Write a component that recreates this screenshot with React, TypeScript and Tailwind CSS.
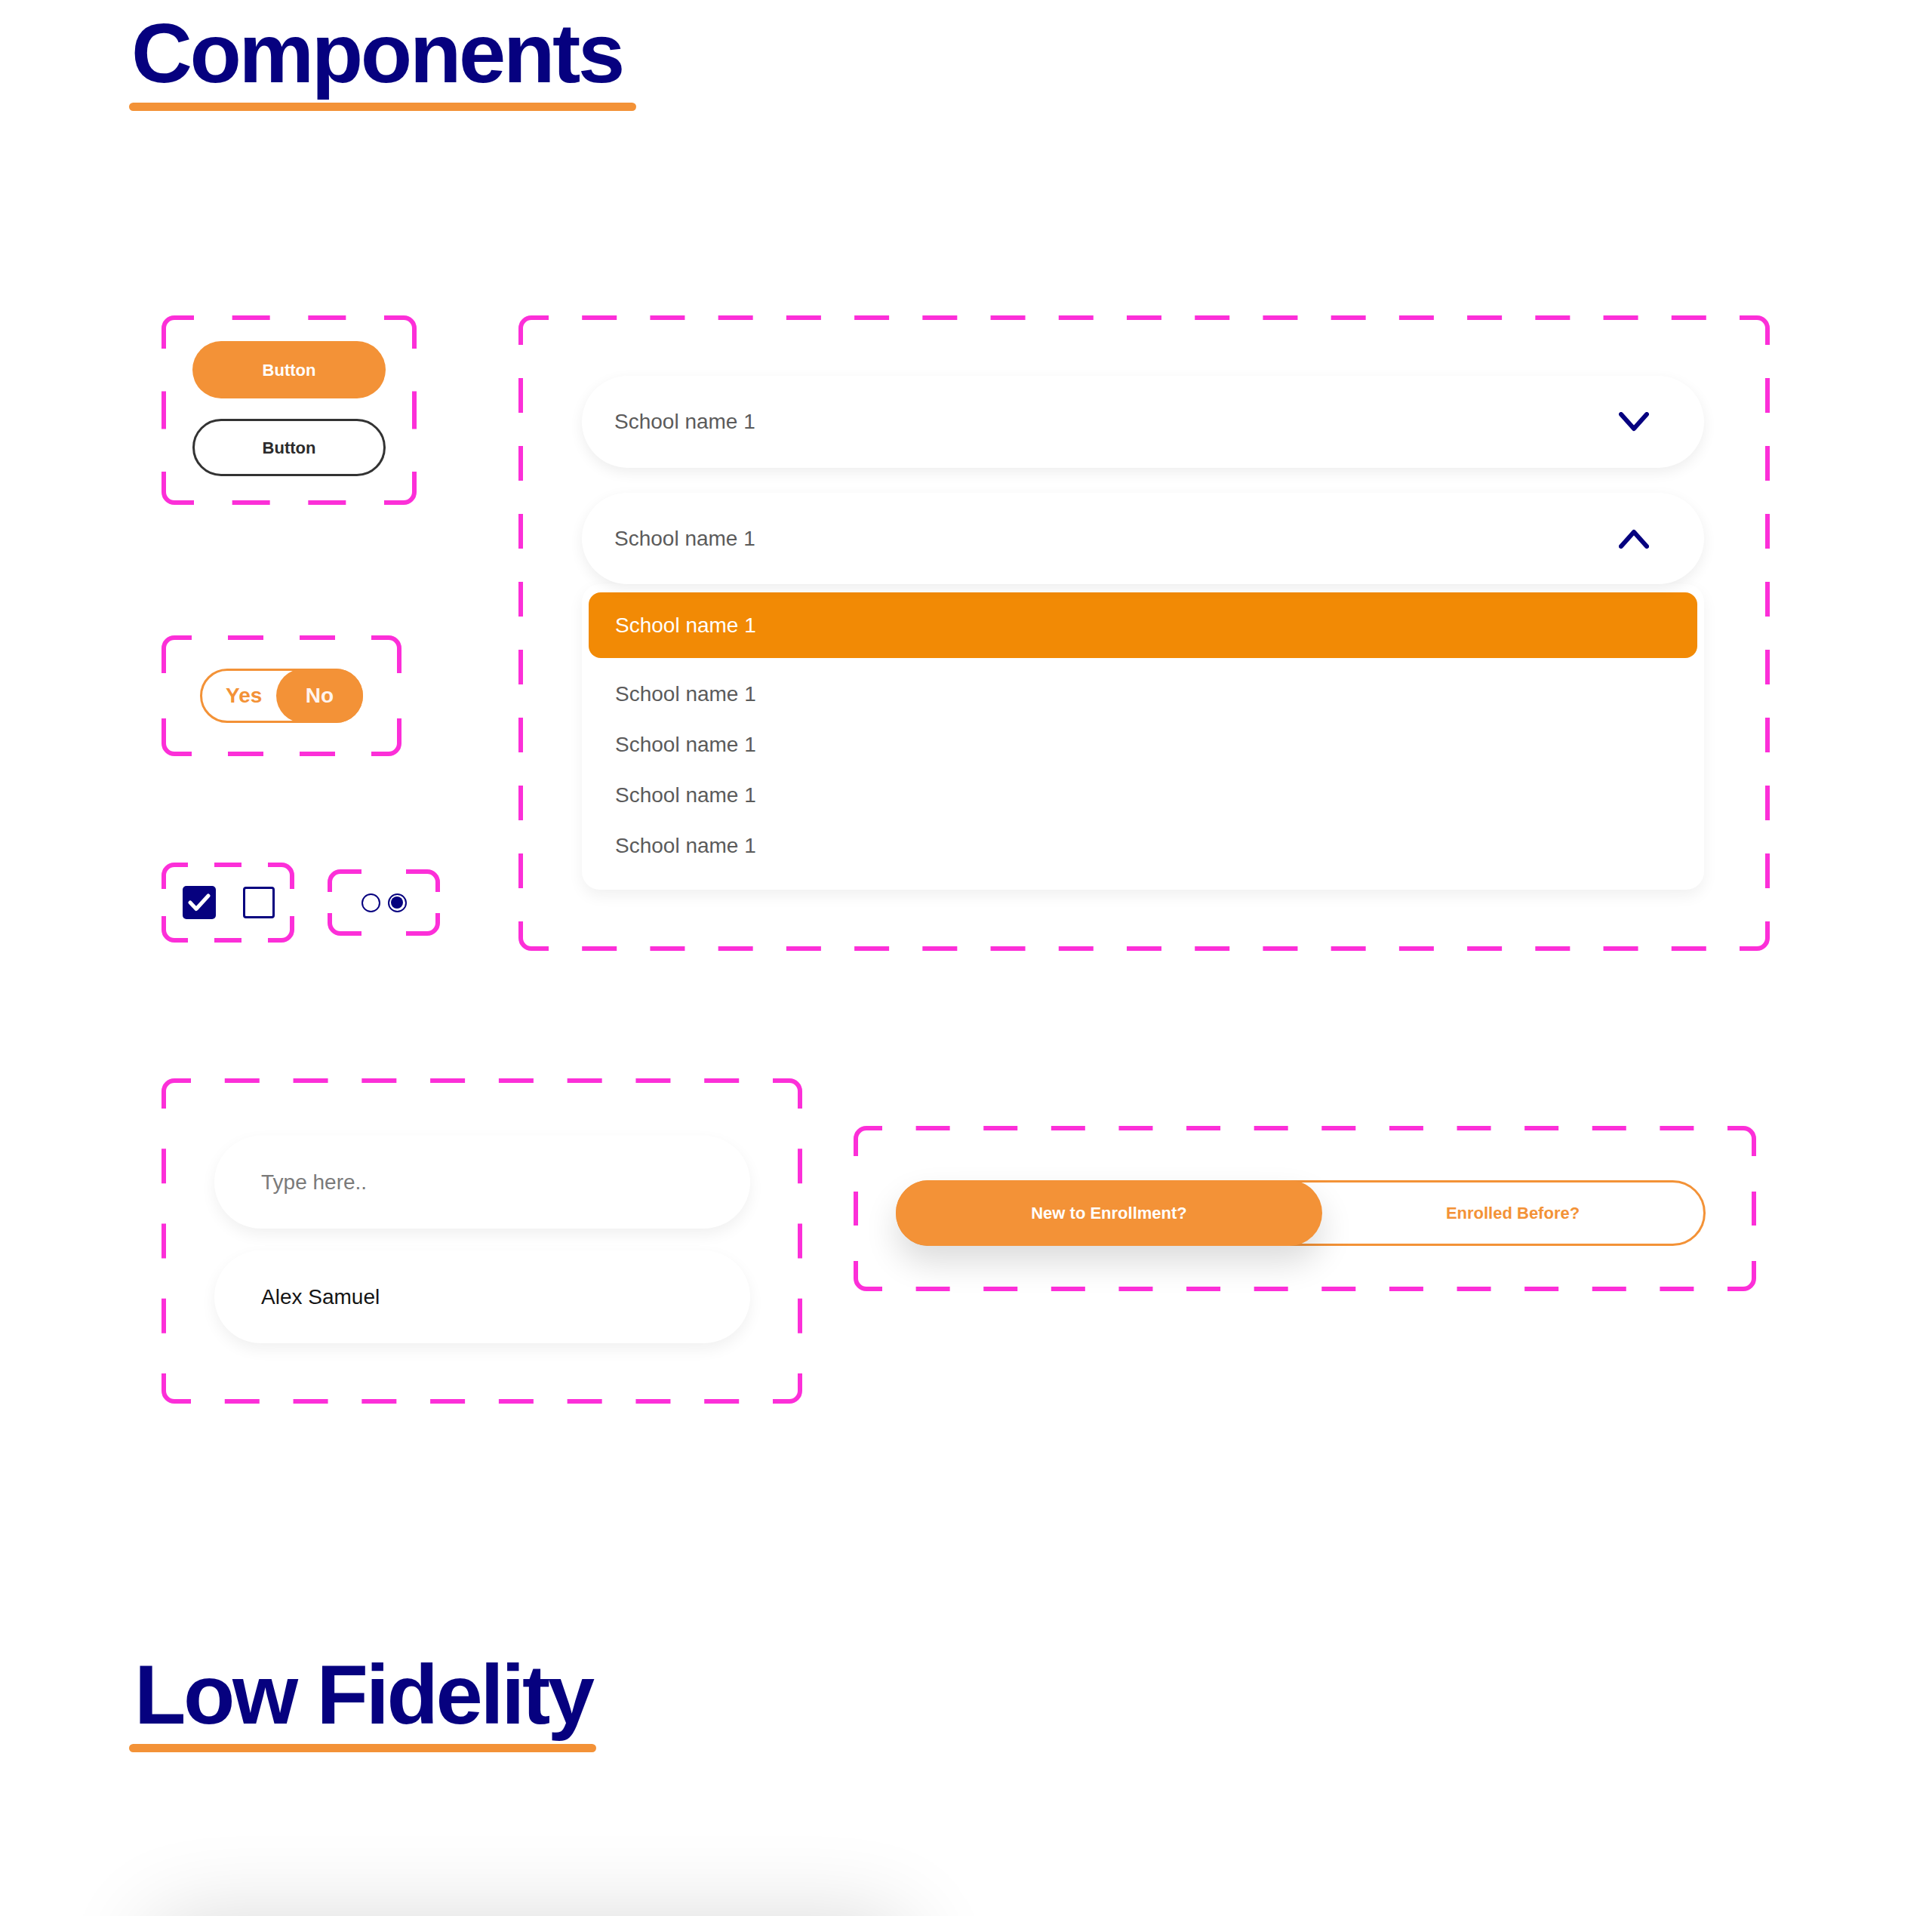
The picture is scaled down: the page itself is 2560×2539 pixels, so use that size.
import type { ReactNode } from "react";

const NAVY = "#06017f";

type FrameProps = {
  w: number;
  h: number;
  ch: number;
  cv: number;
  dash: number;
  gap: number;
  className?: string;
  children?: ReactNode;
};

// evenly spread dashes between the two corner pieces of a side
function sideDashes(len: number, corner: number, dash: number, gap: number) {
  const mid = len - corner * 2;
  const k = Math.max(0, Math.round((mid - gap) / (dash + gap)));
  const g = (mid - k * dash) / (k + 1);
  const out: [number, number][] = [];
  for (let i = 0; i < k; i++) {
    const s = corner + g * (i + 1) + dash * i;
    out.push([s, s + dash]);
  }
  return out;
}

function DashFrame({ w, h, ch, cv, dash, gap, className, children }: FrameProps) {
  const s = 3;
  const r = 14;
  const parts: string[] = [
    `M${s},${cv} L${s},${s + r} A${r},${r} 0 0 1 ${s + r},${s} L${ch},${s}`,
    `M${w - ch},${s} L${w - s - r},${s} A${r},${r} 0 0 1 ${w - s},${s + r} L${w - s},${cv}`,
    `M${w - s},${h - cv} L${w - s},${h - s - r} A${r},${r} 0 0 1 ${w - s - r},${h - s} L${w - ch},${h - s}`,
    `M${ch},${h - s} L${s + r},${h - s} A${r},${r} 0 0 1 ${s},${h - s - r} L${s},${h - cv}`,
  ];
  for (const [a, b] of sideDashes(w, ch, dash, gap)) {
    parts.push(`M${a},${s} L${b},${s}`, `M${a},${h - s} L${b},${h - s}`);
  }
  for (const [a, b] of sideDashes(h, cv, dash, gap)) {
    parts.push(`M${s},${a} L${s},${b}`, `M${w - s},${a} L${w - s},${b}`);
  }
  return (
    <div className={`relative shrink-0 ${className ?? ""}`}>
      <svg className="pointer-events-none absolute left-0 top-0" width={w} height={h} fill="none">
        <path d={parts.join(" ")} stroke="#fc2fd8" strokeWidth={6} />
      </svg>
      {children}
    </div>
  );
}

function Chevron({ up }: { up?: boolean }) {
  return (
    <svg width="40" height="26" viewBox="0 0 40 26" fill="none">
      <polyline
        points={up ? "3,23 20,4 37,23" : "3,3 20,22 37,3"}
        stroke={NAVY}
        strokeWidth={6}
        strokeLinecap="round"
        strokeLinejoin="round"
      />
    </svg>
  );
}

function Select({ up, className }: { up?: boolean; className?: string }) {
  return (
    <div
      className={`relative z-10 flex items-center justify-between rounded-full bg-white pl-[43px] pr-[73px] shadow-[0_6px_18px_rgba(0,0,0,0.07)] ${className ?? ""}`}
    >
      <span className="text-[28px] text-[#5b5b5b]">School name 1</span>
      <Chevron up={up} />
    </div>
  );
}

function Field({ children, muted }: { children: ReactNode; muted?: boolean }) {
  return (
    <div className="flex h-[123px] items-center rounded-full bg-white pl-[62px] shadow-[0_8px_20px_rgba(0,0,0,0.06)]">
      <span className={`text-[28px] ${muted ? "text-[#7a7a7a]" : "text-[#141414]"}`}>{children}</span>
    </div>
  );
}

export default function App() {
  return (
    <div className="relative h-[2539px] w-[2560px] overflow-hidden bg-white font-['Liberation_Sans',Arial,sans-serif]">
      <header className="pl-[171px] pt-[15px]">
        <h1 className="ml-[3px] text-[112px] font-bold leading-none tracking-[-0.03em] text-[#06017f]">Components</h1>
        <div className="mt-[9px] h-[11px] w-[672px] rounded-full bg-[#f39237]" />
      </header>

      <main className="mt-[271px] pl-[214px]">
        <div className="flex items-start">
          <div className="flex w-[473px] shrink-0 flex-col">
            <DashFrame w={338} h={251} ch={43} cv={44} dash={50} gap={50} className="h-[251px] w-[338px]">
              <div className="flex flex-col items-center gap-[27px] pt-[34px]">
                <button className="flex h-[76px] w-[256px] items-center justify-center rounded-full bg-[#f39237] text-[22px] font-bold text-white">
                  Button
                </button>
                <button className="flex h-[76px] w-[256px] items-center justify-center rounded-full border-[3px] border-[#333333] text-[22px] font-bold text-[#2b2b2b]">
                  Button
                </button>
              </div>
            </DashFrame>

            <DashFrame w={318} h={160} ch={40} cv={50} dash={47} gap={48} className="mt-[173px] flex h-[160px] w-[318px] items-center justify-center">
              <div className="relative flex h-[72px] w-[216px] items-center rounded-full border-[3px] border-[#f39237]">
                <span className="ml-[31px] text-[28px] font-bold text-[#f39237]">Yes</span>
                <div className="-mr-[3px] ml-auto flex h-[72px] w-[115px] items-center justify-center rounded-full bg-[#f39237] text-[28px] font-bold text-[#fff3ee]">
                  No
                </div>
              </div>
            </DashFrame>

            <div className="mt-[141px] flex items-center gap-[44px]">
              <DashFrame w={176} h={106} ch={35} cv={35} dash={36} gap={35} className="flex h-[106px] w-[176px] items-center gap-[36px] pl-[28px]">
                <div className="flex h-[44px] w-[44px] items-center justify-center rounded-[5px] bg-[#06017f]">
                  <svg width="44" height="44" viewBox="0 0 44 44" fill="none">
                    <polyline points="10,22 18,30.5 34,13" stroke="#fff" strokeWidth={5} strokeLinecap="round" strokeLinejoin="round" />
                  </svg>
                </div>
                <div className="h-[42px] w-[42px] rounded-[4px] border-[3px] border-[#06017f]" />
              </DashFrame>
              <DashFrame w={149} h={88} ch={45} cv={30} dash={36} gap={35} className="flex h-[88px] w-[149px] items-center justify-center gap-[10px]">
                <div className="h-[25px] w-[25px] rounded-full border-2 border-[#06017f]" />
                <div className="flex h-[25px] w-[25px] items-center justify-center rounded-full border-2 border-[#06017f]">
                  <div className="h-[16px] w-[16px] rounded-full bg-[#06017f]" />
                </div>
              </DashFrame>
            </div>
          </div>

          <DashFrame w={1658} h={842} ch={40} cv={39} dash={46} gap={45} className="h-[842px] w-[1658px] pl-[84px] pr-[87px] pt-[80px]">
            <Select className="h-[122px]" />
            <Select up className="mt-[33px] h-[121px]" />
            <div className="rounded-[24px] bg-white px-[9px] pb-[25px] pt-[11px] shadow-[0_8px_20px_rgba(0,0,0,0.06)]">
              <div className="flex h-[87px] items-center rounded-[16px] bg-[#f28a05] pl-[35px] text-[28px] text-white">School name 1</div>
              <ul className="mt-[14px]">
                {[0, 1, 2, 3].map((i) => (
                  <li key={i} className="flex h-[67px] items-center pl-[35px] text-[28px] text-[#5b5b5b]">
                    School name 1
                  </li>
                ))}
              </ul>
            </div>
          </DashFrame>
        </div>

        <div className="mt-[169px] flex items-start gap-[68px]">
          <DashFrame w={849} h={431} ch={39} cv={40} dash={46} gap={46} className="h-[431px] w-[849px] pl-[70px] pt-[76px]">
            <div className="flex w-[710px] flex-col gap-[29px]">
              <Field muted>Type here..</Field>
              <Field>Alex Samuel</Field>
            </div>
          </DashFrame>

          <DashFrame w={1196} h={219} ch={38} cv={40} dash={45} gap={45} className="mt-[63px] h-[219px] w-[1196px] pl-[56px] pt-[72px]">
            <div className="flex h-[87px] w-[1073px] items-center rounded-full border-[3px] border-[#f39237]">
              <div className="-ml-[3px] flex h-[87px] w-[565px] shrink-0 items-center justify-center rounded-full bg-[#f39237] text-[22px] font-bold text-white shadow-[0_22px_44px_rgba(0,0,0,0.14)]">
                New to Enrollment?
              </div>
              <div className="flex-1 text-center text-[22px] font-bold text-[#f39237]">Enrolled Before?</div>
            </div>
          </DashFrame>
        </div>
      </main>

      <section className="mt-[330px] pl-[171px]">
        <h2 className="ml-[7px] text-[112px] font-bold leading-none tracking-[-0.03em] text-[#06017f]">Low Fidelity</h2>
        <div className="mt-[9px] h-[11px] w-[619px] rounded-full bg-[#f39237]" />
        <div className="ml-[30px] mt-[223px] h-[400px] w-[1000px] rounded-[40px] bg-white shadow-[0_0_120px_rgba(0,0,0,0.16)]" />
      </section>
    </div>
  );
}
